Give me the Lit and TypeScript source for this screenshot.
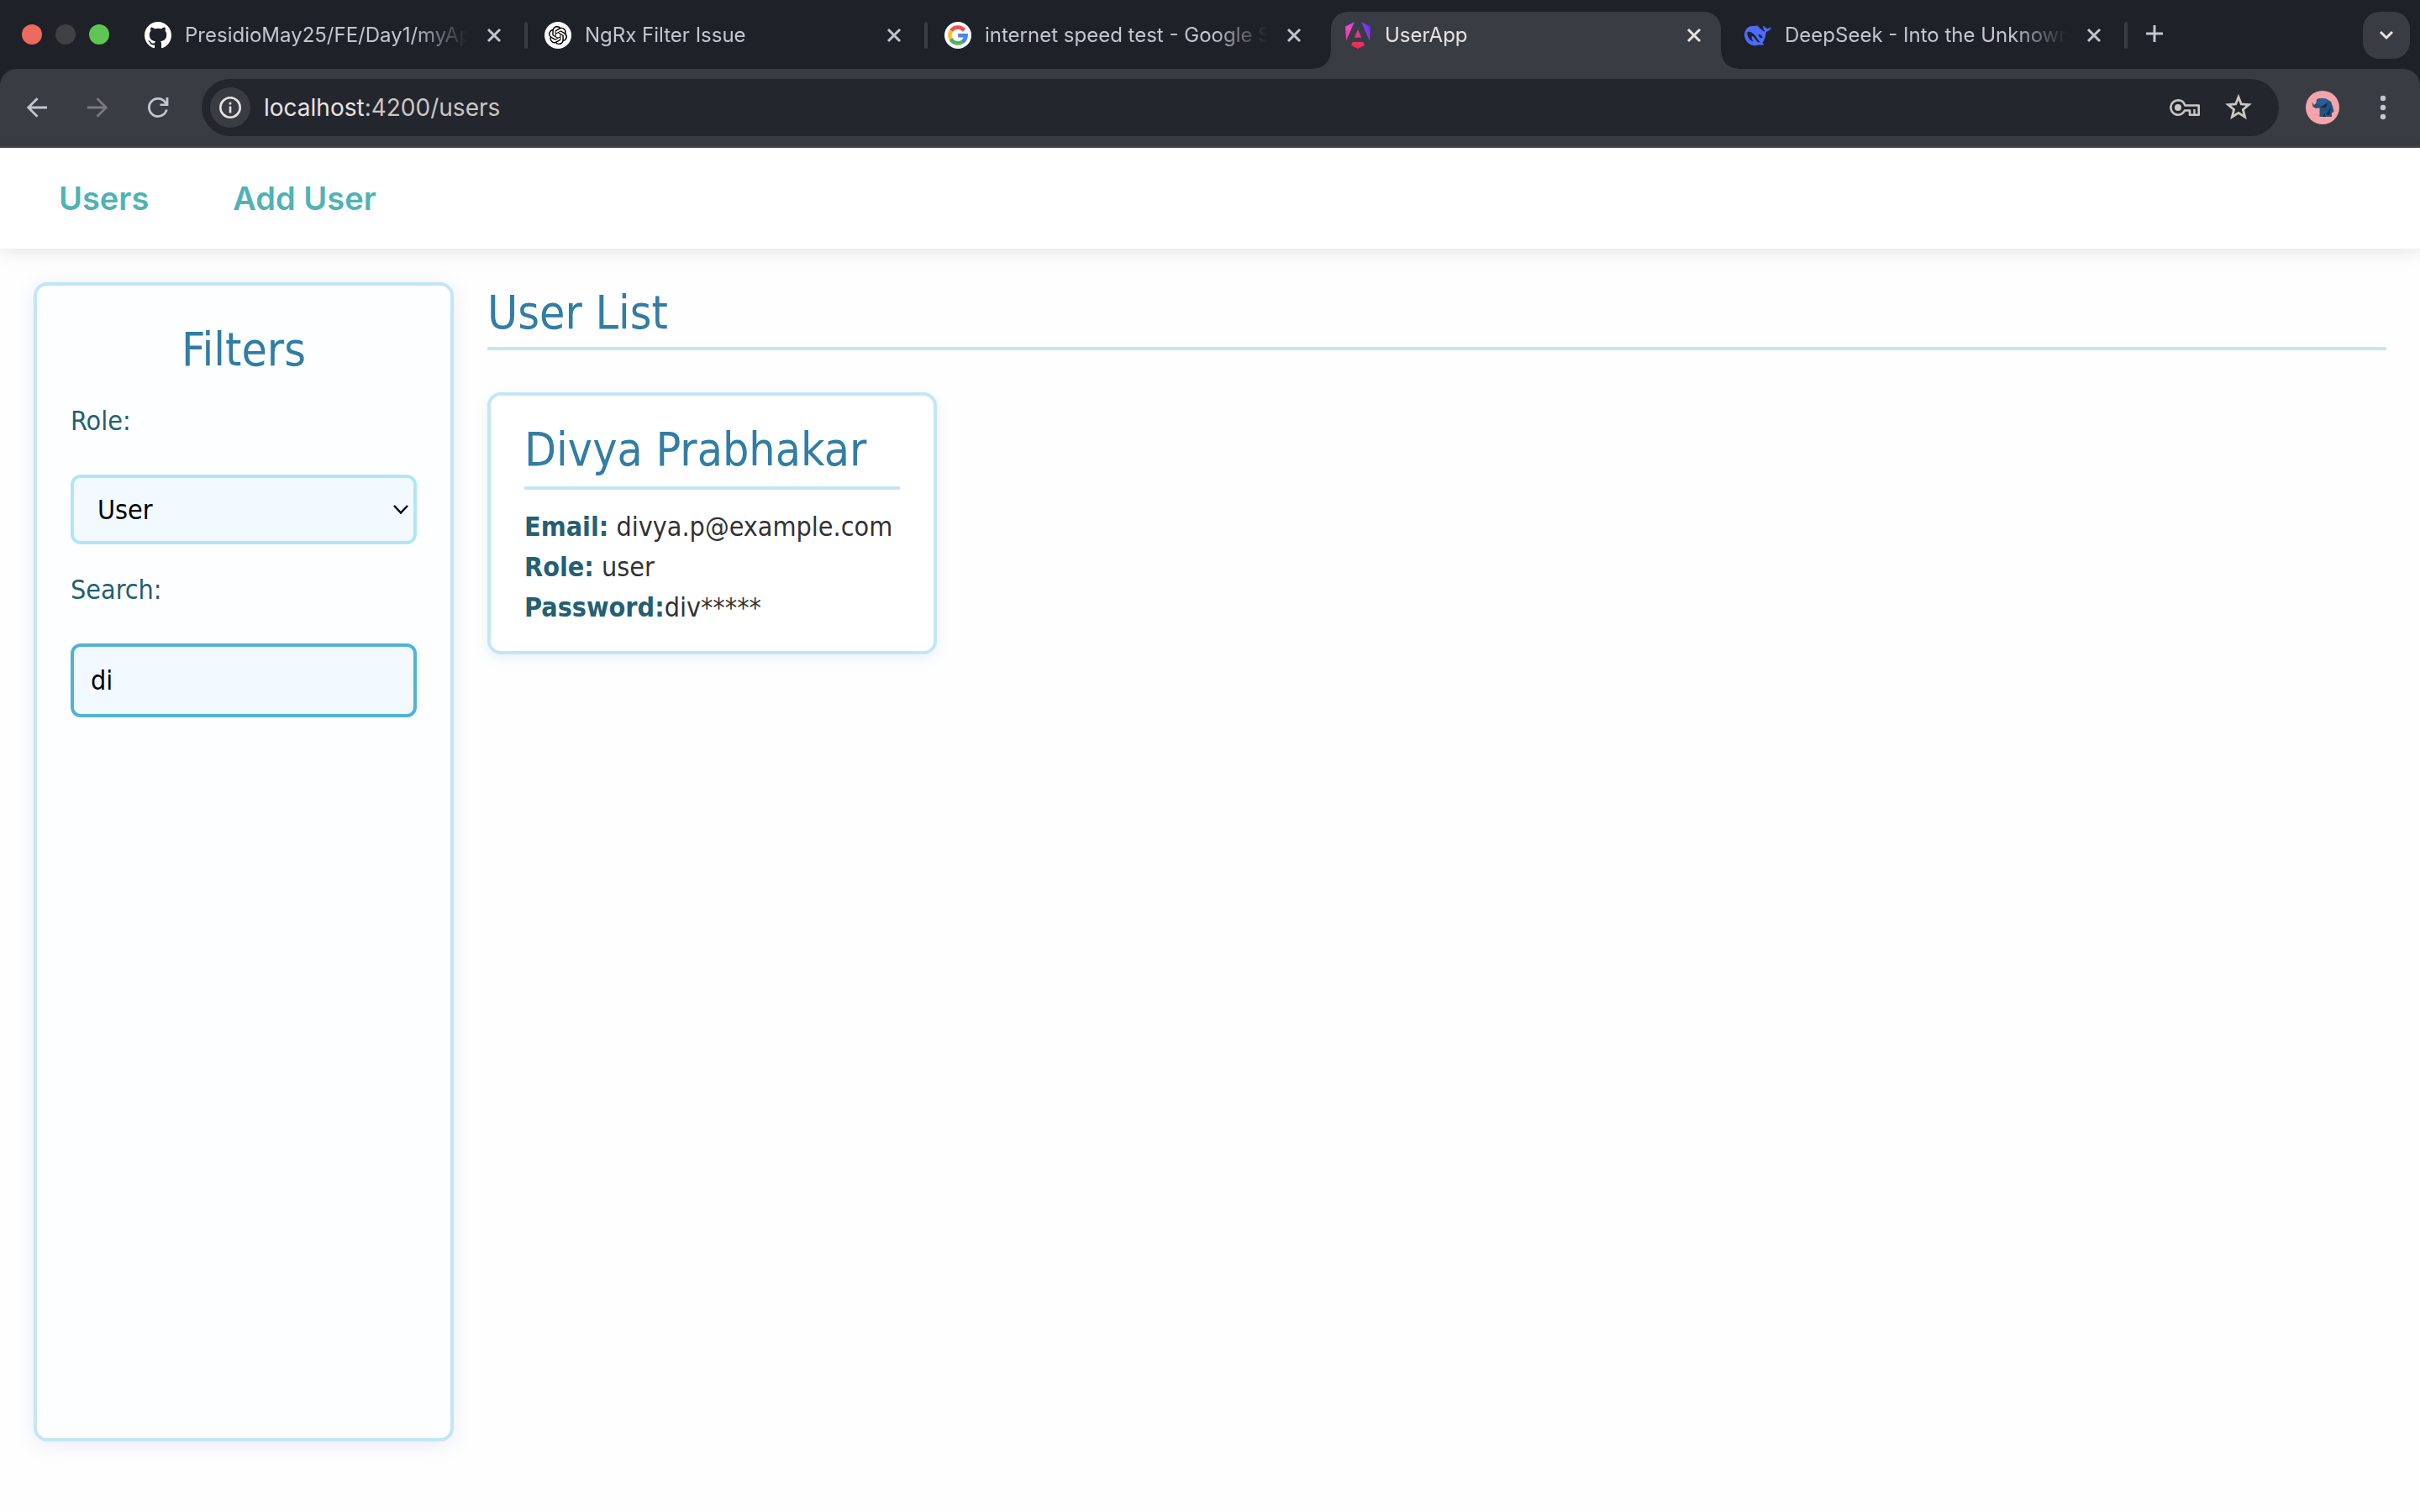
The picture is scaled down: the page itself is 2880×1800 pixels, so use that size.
import { LitElement, html, svg, css } from "lit";
import { customElement, state } from "lit/decorators.js";

const closeIcon = html`<svg class="glyph" viewBox="0 0 20 20" width="20" height="20" aria-hidden="true">
  <path d="M3 3L17 17M17 3L3 17" fill="none" stroke="currentColor" stroke-width="3" />
</svg>`;

const icons: Record<string, unknown> = {
  github: svg`<path fill="#fff" d="M16 0C7.160 0 0 7.160 0 16c0 7.080 4.580 13.060 10.940 15.180.8.140 1.100-.34 1.100-.76 0-.38-.02-1.640-.02-2.980-4.020.74-5.060-.98-5.380-1.880-.18-.46-.96-1.880-1.640-2.260-.56-.3-1.360-1.040-.02-1.060 1.260-.02 2.160 1.160 2.460 1.640 1.440 2.420 3.740 1.740 4.660 1.320.14-1.040.56-1.740 1.020-2.140-3.560-.4-7.280-1.780-7.280-7.900 0-1.740.62-3.180 1.640-4.300-.16-.4-.72-2.040.16-4.240 0 0 1.340-.42 4.400 1.640 1.280-.36 2.640-.54 4-.54s2.720.18 4 .54c3.060-2.080 4.400-1.640 4.400-1.640.88 2.200.32 3.840.16 4.240 1.020 1.120 1.640 2.540 1.640 4.300 0 6.140-3.740 7.500-7.300 7.900.58.5 1.080 1.460 1.080 2.960 0 2.140-.02 3.860-.02 4.400 0 .42.3.92 1.100.76C27.420 29.060 32 23.060 32 16 32 7.160 24.840 0 16 0z"/>`,
  gpt: svg`<circle cx="16" cy="16" r="16" fill="#fff"/><g transform="translate(5 5) scale(.92)"><path fill="#000" d="M22.2819 9.8211a5.9847 5.9847 0 0 0-.5157-4.9108 6.0462 6.0462 0 0 0-6.5098-2.9A6.0651 6.0651 0 0 0 4.9807 4.1818a5.9847 5.9847 0 0 0-3.9977 2.9 6.0462 6.0462 0 0 0 .7427 7.0966 5.98 5.98 0 0 0 .511 4.9107 6.051 6.051 0 0 0 6.5146 2.9001A5.9847 5.9847 0 0 0 13.2599 24a6.0557 6.0557 0 0 0 5.7718-4.2058 5.9894 5.9894 0 0 0 3.9977-2.9001 6.0557 6.0557 0 0 0-.7475-7.0729zm-9.022 12.6081a4.4755 4.4755 0 0 1-2.8764-1.0408l.1419-.0804 4.7783-2.7582a.7948.7948 0 0 0 .3927-.6813v-6.7369l2.02 1.1686a.071.071 0 0 1 .038.052v5.5826a4.504 4.504 0 0 1-4.4945 4.4944zm-9.6607-4.1254a4.4708 4.4708 0 0 1-.5346-3.0137l.142.0852 4.783 2.7582a.7712.7712 0 0 0 .7806 0l5.8428-3.3685v2.3324a.0804.0804 0 0 1-.0332.0615L9.74 19.9502a4.4992 4.4992 0 0 1-6.1408-1.6464zM2.3408 7.8956a4.485 4.485 0 0 1 2.3655-1.9728V11.6a.7664.7664 0 0 0 .3879.6765l5.8144 3.3543-2.0201 1.1685a.0757.0757 0 0 1-.071 0l-4.8303-2.7865A4.504 4.504 0 0 1 2.3408 7.872zm16.5963 3.8558L13.1038 8.364 15.1192 7.2a.0757.0757 0 0 1 .071 0l4.8303 2.7913a4.4944 4.4944 0 0 1-.6765 8.1042v-5.6772a.79.79 0 0 0-.407-.667zm2.0107-3.0231l-.142-.0852-4.7735-2.7818a.7759.7759 0 0 0-.7854 0L9.409 9.2297V6.8974a.0662.0662 0 0 1 .0284-.0615l4.8303-2.7866a4.4992 4.4992 0 0 1 6.6802 4.66zM8.3065 12.863l-2.02-1.1638a.0804.0804 0 0 1-.038-.0567V6.0742a4.4992 4.4992 0 0 1 7.3757-3.4537l-.142.0805L8.704 5.459a.7948.7948 0 0 0-.3927.6813zm1.0976-2.3654l2.602-1.4998 2.6069 1.4998v2.9994l-2.5974 1.4997-2.6067-1.4997Z"/></g>`,
  google: svg`<circle cx="16" cy="16" r="16" fill="#fff"/><g transform="translate(4 4)" fill="none" stroke-width="4.600"><path d="M19.500 6.200A9.700 9.700 0 0 0 4 6.600" stroke="#ef5148"/><path d="M4.200 6.400A9.700 9.700 0 0 0 3.700 16.800" stroke="#fbc02f"/><path d="M3.500 16.500A9.700 9.700 0 0 0 17.500 19.700" stroke="#50b45c"/><path d="M12.200 12.200H21.600A9.600 9.600 0 0 1 17.200 19.900" stroke="#4086f4"/></g>`,
  angular: svg`<defs><linearGradient id="ng" x1="2" y1="24" x2="30" y2="8" gradientUnits="userSpaceOnUse"><stop offset="0" stop-color="#f0329b"/><stop offset=".35" stop-color="#e84fc8"/><stop offset=".7" stop-color="#a044e8"/><stop offset="1" stop-color="#6a2ff0"/></linearGradient><linearGradient id="ngc" x1="10" y1="32" x2="22" y2="10" gradientUnits="userSpaceOnUse"><stop offset="0" stop-color="#ee2c3c"/><stop offset="1" stop-color="#d93bb0"/></linearGradient></defs><path fill="url(#ng)" d="M12 0L1 5.500 2 22.500zM20 0L31 5.500 30 22.500z"/><path fill="url(#ngc)" d="M16 9L20.200 18.800H11.800zM9.800 24H22.200L24 28 16 32 8 28z"/>`,
  deepseek: svg`<path fill="#4d6bfe" d="M31.700 6.300c-.3-.2-.5.200-.7.300-1 .9-2 1.500-3.500 1.400-1 0-1.900-.4-2.600-1.200-.6-.7-.9-1.300-1.800-1.700-.5-.2-1-.400-1 .1.200 2.200.5 4 2 5.400.3.300 0 .800-.3 1.200-1.300-.5-2.500-1.500-3.700-2.700-1.500-1.500-2.900-2.900-4.300-3.900.1-.3.700-.2.600-.6-.2-.4-2.900-.2-4.300.3-2.300 0-4.600-.2-7 1.200C1.800 8.200.1 11.400 0 15c0 4.900 2.200 8.900 6.200 11.500 3.200 2 7.600 2.400 11.200.8 2 .4 4.300.6 5.500 0 .4-.3.200-.9-.3-1.200l-1.500-.8c2.200-2.600 3.500-5.800 4.100-9.200.1-1.700.2-3.200 1-4.300 2.800-.5 4.900-2.400 5.700-5.200zM15.200 23.500c-2.600-2.600-3.500-5.400-5.200-6.200-1.700-.8-1.600.5-1.200 2.200.3 1.300 1 2.700 1.800 4.200-3.900-1.300-7.300-5.700-7.300-10.200 0-1.500 1-1.900 2.300-1.700 3.900.7 6.700 3.300 8.900 7 1.600 2.700 2.700 4.300 4.700 5.400-1.400.3-2.900.200-4-.7zM21.300 19c-1.300.4-2.700 0-3.500-1.200-.8-1.100-1.500-2.200-.6-2.700.9-.6 2.700.400 3.500 1.700.4.700.9 1.300.6 2.200z"/>`,
};

const tabs = [
  { id: "github", title: "PresidioMay25/FE/Day1/myAp", active: false, rule: true },
  { id: "gpt", title: "NgRx Filter Issue", active: false, rule: true },
  { id: "google", title: "internet speed test - Google S", active: false, rule: false },
  { id: "angular", title: "UserApp", active: true, rule: false },
  { id: "deepseek", title: "DeepSeek - Into the Unknown", active: false, rule: true },
];

const users = [{ name: "Divya Prabhakar", email: "divya.p@example.com", role: "user", password: "div*****" }];

@customElement("browser-chrome")
export class BrowserChrome extends LitElement {
  static styles = css`
    :host { display: block; background: #1f2128; color: #c3c5cf; font-family: Inter, "Liberation Sans", sans-serif; }
    * { box-sizing: border-box; }
    button { border: 0; padding: 0; margin: 0; background: none; color: inherit; font: inherit; display: grid; place-items: center; flex: none; }
    svg { display: block; overflow: visible; }
    .strip { display: flex; align-items: flex-start; height: 82px; padding: 14px 12px 0 26px; }
    .lights { display: flex; gap: 16px; padding-top: 15px; width: 130px; flex: none; }
    .light { width: 24px; height: 24px; border-radius: 50%; }
    .red { background: #ed6a5e; }
    .grey { background: #404145; }
    .green { background: #61c554; }
    .tabs { display: flex; gap: 12px; flex: 1; min-width: 0; }
    .tab { position: relative; display: flex; align-items: center; flex: 0 1 464px; min-width: 0; height: 68px; padding: 0 16px 12px; gap: 16px; border-radius: 20px 20px 0 0; }
    .tab.ruled::after { content: ""; position: absolute; right: -8px; top: 12px; width: 4px; height: 32px; border-radius: 2px; background: #3a3c44; }
    .tab.active { background: #3a3c44; color: #e6e3e3; }
    .tab.active::before, .tab.active::after { content: ""; position: absolute; bottom: 0; width: 20px; height: 20px; }
    .tab.active::before { right: 100%; background: radial-gradient(circle at 0 0, transparent 19px, #3a3c44 20px); }
    .tab.active::after { left: 100%; background: radial-gradient(circle at 100% 0, transparent 19px, #3a3c44 20px); }
    .icon { flex: none; }
    .title { flex: 1; min-width: 0; overflow: hidden; white-space: nowrap; font-size: 24px; line-height: 32px; -webkit-mask-image: linear-gradient(90deg, #000 calc(100% - 64px), transparent); mask-image: linear-gradient(90deg, #000 calc(100% - 64px), transparent); }
    .close { width: 32px; height: 32px; }
    .new { width: 56px; height: 52px; }
    .list { width: 56px; height: 56px; border-radius: 20px; background: #3a3c44; color: #e6e3e3; }
    .toolbar { display: flex; align-items: center; height: 94px; padding: 0 14px; background: #3a3c44; border-bottom: 2px solid #4a464b; border-radius: 20px 20px 0 0; }
    .tool { width: 60px; height: 60px; margin-right: 12px; }
    .off { color: #797a80; }
    .omnibox { display: flex; align-items: center; flex: 1; min-width: 0; height: 68px; margin-left: 10px; padding: 0 16px 0 10px; border-radius: 34px; background: #24262e; color: #c9c7c6; }
    .info { width: 48px; height: 48px; border-radius: 50%; background: #3a3c44; color: #e6e3e3; }
    .url { flex: 1; min-width: 0; margin: 0 16px; font-size: 28px; line-height: 36px; }
    .host { color: #e6e3e3; }
    .slot { width: 64px; height: 48px; }
    .avatar { width: 40px; height: 40px; margin: 0 32px; }
    .more { width: 40px; height: 48px; margin-right: 10px; }
  `;

  render() {
    return html`
      <div class="strip">
        <div class="lights"><span class="light red"></span><span class="light grey"></span><span class="light green"></span></div>
        <div class="tabs">
          ${tabs.map(
            (t) => html`<div class="tab ${t.active ? "active" : ""} ${t.rule ? "ruled" : ""}">
              <svg class="icon" viewBox="0 0 32 32" width="32" height="32" aria-hidden="true">${icons[t.id]}</svg>
              <span class="title">${t.title}</span>
              <button class="close" aria-label="Close tab">${closeIcon}</button>
            </div>`,
          )}
          <button class="new" aria-label="New tab">
            <svg viewBox="0 0 20 20" width="20" height="20"><path d="M10 0V20M0 10H20" stroke="currentColor" stroke-width="3" /></svg>
          </button>
        </div>
        <button class="list" aria-label="Search tabs">
          <svg viewBox="0 0 16 10" width="16" height="10"><path d="M1 1L8 8L15 1" fill="none" stroke="currentColor" stroke-width="3" /></svg>
        </button>
      </div>
      <div class="toolbar">
        <button class="tool" aria-label="Back">
          <svg viewBox="0 0 24 24" width="24" height="24"><path d="M24 12H2M12.500 1.200L1.700 12L12.500 22.800" fill="none" stroke="currentColor" stroke-width="2.800" /></svg>
        </button>
        <button class="tool off" aria-label="Forward">
          <svg viewBox="0 0 24 24" width="24" height="24"><path d="M0 12H22M11.500 1.200L22.300 12L11.500 22.800" fill="none" stroke="currentColor" stroke-width="2.800" /></svg>
        </button>
        <button class="tool" aria-label="Reload">
          <svg viewBox="0 0 24 24" width="24" height="24"><path d="M22.300 14.500A10.600 10.600 0 1 1 20.500 5.600L22 8" fill="none" stroke="currentColor" stroke-width="2.800" /><path d="M24.400 0V10H14.500V7.400H21.600V0z" fill="currentColor" /></svg>
        </button>
        <div class="omnibox">
          <button class="info" aria-label="Site information">
            <svg viewBox="0 0 26 26" width="26" height="26"><circle cx="13" cy="13" r="11.700" fill="none" stroke="currentColor" stroke-width="2.600" /><path d="M11.700 11.500H14.300V19.500H11.700zM11.700 6.800H14.300V9.400H11.700z" fill="currentColor" /></svg>
          </button>
          <span class="url"><span class="host">localhost</span>:4200/users</span>
          <button class="slot" aria-label="Passwords">
            <svg viewBox="0 0 36 20" width="36" height="20"><path d="M10 1.300A8.700 8.700 0 1 0 18 13.500H24V18.700H34.700V7.500H18.300A8.700 8.700 0 0 0 10 1.300z" fill="none" stroke="currentColor" stroke-width="2.600" stroke-linejoin="round" /><circle cx="10" cy="10" r="4" fill="currentColor" /><path d="M29.500 12V18" stroke="currentColor" stroke-width="2.400" /></svg>
          </button>
          <button class="slot" aria-label="Bookmark">
            <svg viewBox="0 0 32 32" width="32" height="32"><path d="M16 3.500L19.300 11.900 28.300 12.600 21.400 18.400 23.600 27.200 16 22.400 8.400 27.200 10.600 18.400 3.700 12.600 12.700 11.900z" fill="none" stroke="currentColor" stroke-width="2.800" /></svg>
          </button>
        </div>
        <button class="avatar" aria-label="Profile">
          <svg viewBox="0 0 40 40" width="40" height="40"><circle cx="20" cy="20" r="20" fill="#f4a5aa" /><path d="M8 28.500H17V29.500z" fill="#d98f98" /><path d="M7.500 13.500L10 17 12.500 14.500 13 10.500 16 9 24 9.500 30 13 32.500 20 33.500 25 31 26.500 31 31H24.500L23.500 28 21.500 31H16.500V20.500L12 21 8.500 19z" fill="#24527f" /><path d="M16 9L24 9.500 26.500 14 18 18.500 13 15z" fill="#2b5f94" /><path d="M17 20L26 14 24 20zM24 28L30 20 28 29zM20 31L22.500 27 24.500 31z" fill="#142c49" /></svg>
        </button>
        <button class="more" aria-label="Menu">
          <svg viewBox="0 0 8 28" width="8" height="28"><circle cx="4" cy="3" r="3.200" fill="currentColor" /><circle cx="4" cy="14" r="3.200" fill="currentColor" /><circle cx="4" cy="25" r="3.200" fill="currentColor" /></svg>
        </button>
      </div>
    `;
  }
}

@customElement("user-card")
export class UserCard extends LitElement {
  static properties = { user: { attribute: false } };
  declare user: (typeof users)[number];

  static styles = css`
    :host { display: block; padding: 28px 40px; border: 4px solid #c3e6f5; border-radius: 16px; background: #fff; box-shadow: 0 4px 16px rgba(70, 130, 200, 0.12); }
    .name { margin: 0 0 20px; padding-bottom: 8px; border-bottom: 4px solid #c3e6f5; color: #327da5; font-size: 55px; font-weight: 400; line-height: 72px; white-space: nowrap; }
    .row { margin: 0; color: #333; line-height: 48px; }
    .key { color: #245f73; font-weight: 700; }
  `;

  render() {
    const u = this.user;
    return html`
      <h2 class="name">${u.name}</h2>
      <p class="row"><strong class="key">Email:</strong> ${u.email}</p>
      <p class="row"><strong class="key">Role:</strong> ${u.role}</p>
      <p class="row"><strong class="key">Password:</strong>${u.password}</p>
    `;
  }
}

@customElement("app-root")
export class AppRoot extends LitElement {
  @state() private query = "di";

  static styles = css`
    :host { display: flex; flex-direction: column; min-height: 100vh; background: #fefefe; font-family: "DejaVu Sans Condensed", "Noto Sans", sans-serif; font-size: 32px; }
    * { box-sizing: border-box; }
    .nav { display: flex; align-items: center; gap: 100px; height: 120px; padding: 0 70px; background: #fff; box-shadow: 0 4px 20px rgba(0, 0, 0, 0.1); font-family: Inter, "Liberation Sans", sans-serif; }
    .link { color: #4fb3b5; font-size: 38px; font-weight: 600; line-height: 48px; text-decoration: none; }
    .main { display: flex; flex: 1; gap: 40px; padding: 40px 40px 84px; }
    .filters { display: flex; flex-direction: column; width: 500px; flex: none; padding: 40px; border: 4px solid #c3e6f5; border-radius: 16px; background: #fdfeff; box-shadow: 0 4px 24px rgba(70, 110, 190, 0.12); }
    .heading { margin: 0; color: #327da5; font-size: 55px; font-weight: 400; line-height: 72px; }
    .centered { text-align: center; }
    .label { color: #245f73; line-height: 48px; }
    .role { margin-top: 25px; }
    .search { margin-top: 30px; }
    .picker { position: relative; margin-top: 40px; }
    .chevron { position: absolute; right: 10px; top: 36px; pointer-events: none; }
    .field { display: block; width: 100%; border: 4px solid #b0e6f5; border-radius: 12px; background: #f3faff; color: #000; font: inherit; outline: none; appearance: none; }
    .select { height: 83px; padding: 0 28px; }
    .input { height: 88px; margin-top: 40px; padding: 0 20px; border-color: #4fb3d9; }
    .content { flex: 1; min-width: 0; }
    .ruled { padding-bottom: 5px; border-bottom: 4px solid #c3e6f5; }
    .cards { display: grid; grid-template-columns: repeat(4, 1fr); gap: 40px; margin-top: 50px; }
  `;

  render() {
    return html`
      <browser-chrome></browser-chrome>
      <nav class="nav">
        <a class="link" href="#users">Users</a>
        <a class="link" href="#add">Add User</a>
      </nav>
      <main class="main">
        <aside class="filters">
          <h2 class="heading centered">Filters</h2>
          <label class="label role" for="role">Role:</label>
          <div class="picker">
            <select class="field select" id="role">
              <option selected>User</option>
            </select>
            <svg class="chevron" viewBox="0 0 18 11" width="18" height="11" aria-hidden="true"><path d="M1 1L9 9.500L17 1" fill="none" stroke="#000" stroke-width="2.400" /></svg>
          </div>
          <label class="label search" for="search">Search:</label>
          <input class="field input" id="search" type="text" .value=${this.query} @input=${(e: Event) => (this.query = (e.target as HTMLInputElement).value)} />
        </aside>
        <section class="content">
          <h2 class="heading ruled">User List</h2>
          <div class="cards">${users.map((u) => html`<user-card .user=${u}></user-card>`)}</div>
        </section>
      </main>
    `;
  }
}
